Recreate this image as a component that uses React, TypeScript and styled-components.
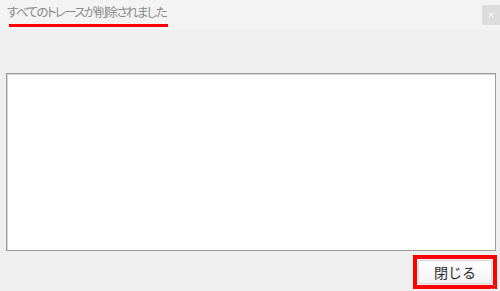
import React from "react";
import styled, { createGlobalStyle } from "styled-components";

const GlobalStyle = createGlobalStyle`
  html, body {
    margin: 0;
    padding: 0;
    background: #f0f0f0;
  }
  body {
    font-family: "Noto Sans CJK JP", "Noto Sans", sans-serif;
  }
`;

const Dialog = styled.div`
  width: 500px;
  height: 291px;
  display: flex;
  flex-direction: column;
  background: #efefef;
  position: relative;
  overflow: hidden;
`;

const TitleBar = styled.div`
  height: 30px;
  flex: 0 0 30px;
  display: flex;
  align-items: flex-start;
  justify-content: space-between;
  background: #f3f3f3;
`;

const Title = styled.div`
  margin: 2px 0 0 7px;
  display: flex;
  flex-direction: column;
  align-items: flex-start;
`;

const TitleText = styled.span`
  font-size: 12.5px;
  line-height: 19px;
  color: #8a8a8a;
  font-feature-settings: "palt";
  letter-spacing: -1.6px;
`;

const Underline = styled.span`
  display: block;
  margin: 3px 0 0 2px;
  width: 159px;
  height: 3px;
  background: #ff0000;
`;

const CloseBox = styled.div`
  margin-top: 5px;
  width: 18px;
  height: 20px;
  background: #dcdcdc;
  display: flex;
  align-items: center;
  justify-content: center;
`;

const Body = styled.div`
  flex: 1;
  display: flex;
  flex-direction: column;
  padding: 43px 4px 0 6px;
`;

const Output = styled.div`
  height: 176px;
  background: #ffffff;
  border: 1px solid #9c9c9c;
  box-shadow: inset 1px 1px 0 #d6d6d6;
`;

const Footer = styled.div`
  display: flex;
  justify-content: flex-end;
  padding-top: 4px;
  margin-right: -1px;
`;

const Highlight = styled.div`
  border: 4px solid #ff0000;
  padding: 1px;
  background: #f0f0f0;
`;

const CloseButton = styled.button`
  width: 74px;
  height: 24px;
  border: 1px solid #d9d9d9;
  border-radius: 2px;
  background: linear-gradient(#ffffff, #f3f3f3);
  font-family: "Noto Sans CJK JP", sans-serif;
  font-size: 14px;
  color: #2a2a2a;
  padding: 0;
  display: flex;
  align-items: center;
  justify-content: center;
`;

const Grip = styled.svg`
  position: absolute;
  right: 1px;
  bottom: 1px;
`;

export default function App() {
  return (
    <>
      <GlobalStyle />
      <Dialog>
        <TitleBar>
          <Title>
            <TitleText>すべてのトレースが削除されました</TitleText>
            <Underline />
          </Title>
          <CloseBox>
            <svg width="6" height="6" viewBox="0 0 6 6">
              <path d="M0.5 0.5 L5.5 5.5 M5.5 0.5 L0.5 5.5" stroke="#ffffff" strokeWidth="1" />
            </svg>
          </CloseBox>
        </TitleBar>
        <Body>
          <Output />
          <Footer>
            <Highlight>
              <CloseButton>閉じる</CloseButton>
            </Highlight>
          </Footer>
        </Body>
        <Grip width="8" height="8" viewBox="0 0 8 8">
          <rect x="6" y="0" width="1" height="1" fill="#b8b8b8" />
          <rect x="3" y="3" width="1" height="1" fill="#b8b8b8" />
          <rect x="6" y="3" width="1" height="1" fill="#b8b8b8" />
          <rect x="0" y="6" width="1" height="1" fill="#b8b8b8" />
          <rect x="3" y="6" width="1" height="1" fill="#b8b8b8" />
          <rect x="6" y="6" width="1" height="1" fill="#b8b8b8" />
        </Grip>
      </Dialog>
    </>
  );
}
